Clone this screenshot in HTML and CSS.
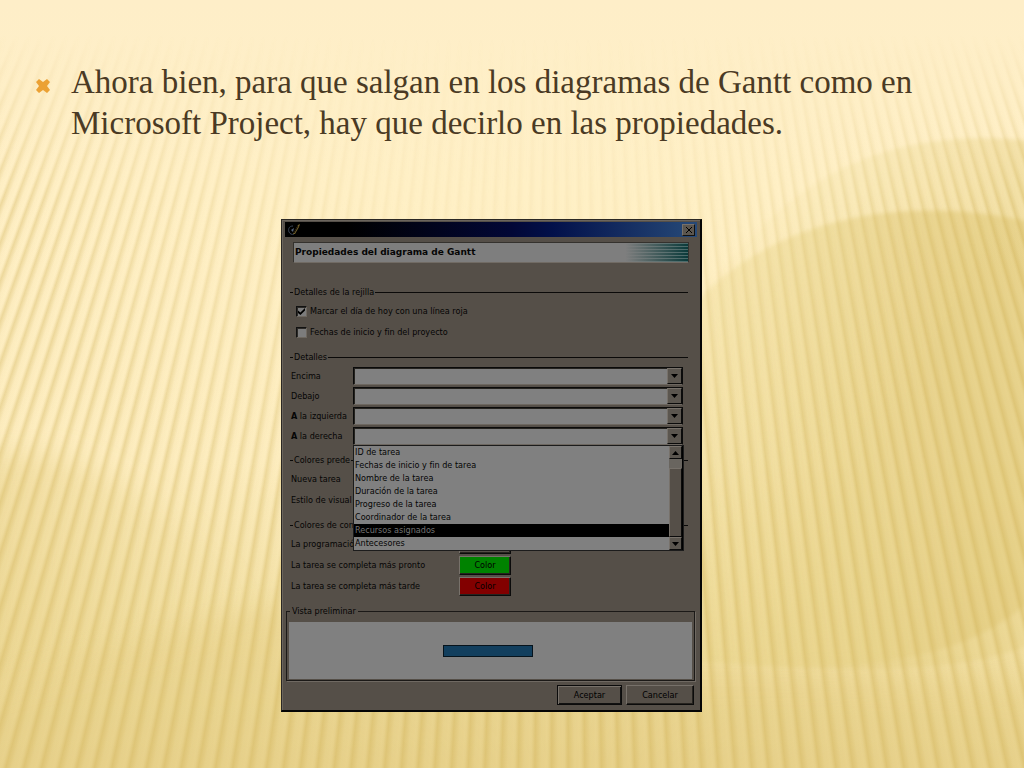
FILE: index.html
```html
<!DOCTYPE html>
<html lang="es">
<head>
  <meta charset="UTF-8" />
  <meta name="viewport" content="width=device-width, initial-scale=1.0"/>
  <title>Propiedades del diagrama de Gantt</title>
  <link rel="stylesheet" href="styles.css">
</head>
<body>
  <div class="slide">
    <!-- Fondo: ondas y rayos -->
    <svg class="ondas" viewBox="0 0 1024 768" preserveAspectRatio="none" aria-hidden="true">
      <defs>
        <linearGradient id="base" x1="0" y1="0" x2="0" y2="1">
          <stop offset="0" stop-color="#feeec8"/>
          <stop offset="0.25" stop-color="#fff0c6"/>
          <stop offset="0.6" stop-color="#fdedbf"/>
          <stop offset="0.8" stop-color="#f3e1a6"/>
          <stop offset="1" stop-color="#ead591"/>
        </linearGradient>
        <linearGradient id="onda1" x1="0.1" y1="0.1" x2="0.6" y2="0.5">
          <stop offset="0" stop-color="#ecd890" stop-opacity="0"/>
          <stop offset="1" stop-color="#e8d28a" stop-opacity="0.5"/>
        </linearGradient>
        <linearGradient id="onda2" x1="0" y1="0.4" x2="0.7" y2="0.3">
          <stop offset="0" stop-color="#ecd990" stop-opacity="0.25"/>
          <stop offset="1" stop-color="#e4cd82" stop-opacity="0.65"/>
        </linearGradient>
        <linearGradient id="lado" x1="0" y1="0" x2="1" y2="0">
          <stop offset="0" stop-color="#e8d189" stop-opacity="0.55"/>
          <stop offset="1" stop-color="#e8d189" stop-opacity="0"/>
        </linearGradient>
        <filter id="suave"><feGaussianBlur stdDeviation="14"/></filter>
        <filter id="borde"><feGaussianBlur stdDeviation="2"/></filter>
      </defs>
      <rect width="1024" height="768" fill="url(#base)"/>
      <path d="M-40 470 C40 420 150 480 250 600 C180 650 90 670 -40 690Z" fill="url(#lado)" filter="url(#suave)"/>
      <path d="M-40 700 C100 650 200 620 300 600 C450 720 700 650 1060 690 V800 H-40Z" fill="#e6cf86" opacity="0.45" filter="url(#suave)"/>
      <path d="M690 310 C770 200 860 120 1040 142 V640 C960 680 820 670 690 660Z" fill="url(#onda1)" filter="url(#borde)"/>
      <path d="M690 310 C750 235 880 185 1040 224 V590 C980 660 850 680 690 660Z" fill="url(#onda2)" filter="url(#borde)"/>
    </svg>
    <div class="rayos"></div>

    <ul class="texto">
      <li>
        <svg class="vineta" viewBox="0 0 16 16" aria-hidden="true"><path d="M1 4L4 1L8 4L12 1L15 4L12 8L15 12L12 15L8 12L4 15L1 12L4 8Z"/></svg>
        <p>Ahora bien, para que salgan en los diagramas de Gantt como en Microsoft Project, hay que decirlo en las propiedades.</p>
      </li>
    </ul>

    <form class="dialogo" onsubmit="return false">
      <div class="barra-titulo">
        <svg class="icono" viewBox="0 0 14 14" aria-hidden="true"><path d="M6 3C2 3 1 6 2 9C3 11 5 12 7 11" fill="none" stroke="#3b4656" stroke-width="1"/><path d="M4 7L7 5L6 9Z" fill="#56657b"/><path d="M6 11L11 2L13 1L12 4L8 11Z" fill="#72602a"/><path d="M7 10L11 3" stroke="#16110a"/></svg>
        <button type="button" class="cerrar" aria-label="Cerrar"><svg viewBox="0 0 8 8"><path d="M1 1L7 7M7 1L1 7"/></svg></button>
      </div>

      <div class="cabecera">
        <h1>Propiedades del diagrama de Gantt</h1>
        <div class="franjas"></div>
      </div>

      <h2 class="seccion">Detalles de la rejilla</h2>
      <label class="casilla"><input type="checkbox" checked><span>Marcar el día de hoy con una línea roja</span></label>
      <label class="casilla"><input type="checkbox"><span>Fechas de inicio y fin del proyecto</span></label>

      <h2 class="seccion seccion-media">Detalles</h2>
      <div class="campo">
        <label for="encima">Encima</label>
        <div class="combo"><select id="encima"><option></option></select><span class="flecha"><svg viewBox="0 0 7 4"><path d="M0 0H7L3.500 4Z"/></svg></span></div>
      </div>
      <div class="campo">
        <label for="debajo">Debajo</label>
        <div class="combo"><select id="debajo"><option></option></select><span class="flecha"><svg viewBox="0 0 7 4"><path d="M0 0H7L3.500 4Z"/></svg></span></div>
      </div>
      <div class="campo">
        <label for="izquierda"><b>A</b> la izquierda</label>
        <div class="combo"><select id="izquierda"><option></option></select><span class="flecha"><svg viewBox="0 0 7 4"><path d="M0 0H7L3.500 4Z"/></svg></span></div>
      </div>
      <div class="campo">
        <label for="derecha"><b>A</b> la derecha</label>
        <div class="combo">
          <select id="derecha"><option></option></select><span class="flecha"><svg viewBox="0 0 7 4"><path d="M0 0H7L3.500 4Z"/></svg></span>
          <div class="desplegable">
            <ul role="listbox" aria-label="A la derecha">
              <li role="option">ID de tarea</li>
              <li role="option">Fechas de inicio y fin de tarea</li>
              <li role="option">Nombre de la tarea</li>
              <li role="option">Duración de la tarea</li>
              <li role="option">Progreso de la tarea</li>
              <li role="option">Coordinador de la tarea</li>
              <li role="option" aria-selected="true" class="elegida">Recursos asignados</li>
              <li role="option">Antecesores</li>
            </ul>
            <div class="scroll">
              <span class="scroll-boton"><svg viewBox="0 0 7 4"><path d="M0 4H7L3.500 0Z"/></svg></span>
              <span class="scroll-pista"></span>
              <span class="scroll-pulgar"></span>
              <span class="scroll-boton"><svg viewBox="0 0 7 4"><path d="M0 0H7L3.500 4Z"/></svg></span>
            </div>
          </div>
        </div>
      </div>

      <h2 class="seccion seccion-media">Colores prede</h2>
      <div class="fila">Nueva tarea</div>
      <div class="fila">Estilo de visual</div>

      <h2 class="seccion seccion-media">Colores de con</h2>
      <div class="fila"><span>La programació</span><button type="button" class="color" aria-label="Color de la programación"></button></div>
      <div class="fila"><span>La tarea se completa más pronto</span><button type="button" class="color verde">Color</button></div>
      <div class="fila"><span>La tarea se completa más tarde</span><button type="button" class="color rojo">Color</button></div>

      <fieldset class="vista">
        <legend>Vista preliminar</legend>
        <div class="lienzo"><div class="barra-gantt"></div></div>
      </fieldset>

      <div class="botones">
        <button type="submit" class="boton aceptar">Aceptar</button>
        <button type="button" class="boton">Cancelar</button>
      </div>
    </form>
  </div>
</body>
</html>
```

FILE: styles.css
```css
* {
  box-sizing: border-box;
}

body {
  margin: 0;
  background: #feeec8;
}

.slide {
  position: relative;
  min-height: 100vh;
  display: grid;
  grid-template-columns: 281fr 421fr 322fr;
  grid-template-rows: auto auto;
  align-content: start;
  row-gap: 75px;
  padding: 62px 0 48px;
  overflow: hidden;
}

/* FONDO */
.ondas,
.rayos {
  position: absolute;
  inset: 0;
  width: 100%;
  height: 100%;
}

.rayos {
  background: repeating-conic-gradient(from 0deg at 55% -1260px,
    rgba(201, 168, 72, 0) 0deg,
    rgba(201, 168, 72, 0.04) 0.15deg,
    rgba(201, 168, 72, 0.32) 0.32deg,
    rgba(201, 168, 72, 0.04) 0.42deg,
    rgba(201, 168, 72, 0) 0.47deg);
  mask-image: linear-gradient(to bottom, transparent 35px, black 200px),
    radial-gradient(ellipse 50% 60% at 50% 15%, rgba(0, 0, 0, 0.2) 30%, black 100%);
  mask-composite: intersect;
}

/* TEXTO */
.texto {
  position: relative;
  grid-column: 1 / -1;
  list-style: none;
  margin: 0;
  padding: 0 80px 0 35px;
  font-family: "Liberation Serif", "Times New Roman", serif;
  font-size: 33px;
  line-height: 41px;
  color: #4a3a24;
}

.texto li {
  display: flex;
  align-items: flex-start;
  gap: 20px;
}

.texto p {
  margin: 0;
}

.vineta {
  flex: none;
  width: 16px;
  height: 16px;
  margin-top: 16px;
  fill: #eba134;
}

/* DIALOGO */
.dialogo {
  position: relative;
  grid-column: 2;
  display: flex;
  flex-direction: column;
  padding: 2px 3px 5px 3px;
  background: #554f48;
  border: 1px solid #2b2824;
  border-right: 2px solid #050505;
  border-bottom: 2px solid #050505;
  box-shadow: inset 1px 1px #6b655d;
  font-family: "DejaVu Sans Condensed", "DejaVu Sans", Tahoma, sans-serif;
  font-size: 9px;
  line-height: 13px;
  color: #050505;
}

.barra-titulo {
  display: flex;
  justify-content: space-between;
  align-items: center;
  height: 15px;
  padding: 0 2px;
  background: linear-gradient(to right, #000 15%, #020736 55%, #02104a 65%, #274a78);
}

.icono {
  width: 14px;
  height: 14px;
}

.cerrar {
  display: flex;
  align-items: center;
  justify-content: center;
  width: 13px;
  height: 12px;
  padding: 0;
  background: #5b564f;
  border: 1px solid;
  border-color: #77716a #111 #111 #77716a;
}

.cerrar svg {
  width: 8px;
  height: 8px;
  fill: none;
  stroke: #000;
  stroke-width: 1;
}

.cabecera {
  display: flex;
  justify-content: space-between;
  height: 21px;
  margin: 5px 8px 23px;
  background: #7e7e7e;
  border: 1px solid;
  border-color: #35322e #35322e #716b64 #35322e;
}

.cabecera h1 {
  margin: 0;
  padding-left: 1px;
  font-family: "DejaVu Sans", Verdana, sans-serif;
  font-size: 9px;
  line-height: 19px;
}

.franjas {
  width: 66px;
  background: linear-gradient(to right, #7e7e7e 5%, rgba(126, 126, 126, 0)),
    repeating-linear-gradient(to bottom, #4a6a6a 0, #4a6a6a 1px, #0a3a3a 1px, #0a3a3a 3px);
}

.seccion {
  display: flex;
  align-items: center;
  margin: 0 9px 2px 5px;
  font-size: 9px;
  font-weight: normal;
  line-height: 13px;
  white-space: nowrap;
}

.seccion::before {
  content: "";
  width: 3px;
  height: 1px;
  margin-right: 1px;
  background: #0b0a09;
}

.seccion::after {
  content: "";
  flex: 1;
  height: 1px;
  margin-left: 1px;
  background: #0b0a09;
}

.seccion-media {
  margin-top: 8px;
}

.casilla {
  display: flex;
  align-items: center;
  height: 21px;
  padding-left: 11px;
  gap: 3px;
}

.casilla input {
  appearance: none;
  width: 11px;
  height: 11px;
  margin: 0;
  background: #7c7c7c;
  border: 1px solid;
  border-color: #111 #6e6860 #6e6860 #111;
  box-shadow: inset 1px 1px #2c2a27;
}

.casilla input:checked::before {
  content: "";
  display: block;
  width: 7px;
  height: 7px;
  margin: 1px;
  background: #000;
  clip-path: polygon(0 35%, 35% 65%, 100% 0, 100% 35%, 35% 100%, 0 70%);
}

.campo {
  display: grid;
  grid-template-columns: 62px 1fr;
  align-items: center;
  height: 20px;
  padding: 0 14px 0 6px;
  white-space: nowrap;
}

.combo {
  position: relative;
  display: flex;
  height: 18px;
  background: #808080;
  border: 1px solid;
  border-color: #0b0b0b #0b0b0b #6d6760 #0b0b0b;
  box-shadow: inset 1px 1px #25231f;
}

.combo select {
  appearance: none;
  flex: 1;
  min-width: 0;
  padding: 0;
  background: none;
  border: none;
  font: inherit;
}

.flecha,
.scroll-boton {
  display: flex;
  align-items: center;
  justify-content: center;
  width: 15px;
  background: #5b564f;
  border: 1px solid;
  border-color: #77716a #0b0b0b #0b0b0b #77716a;
}

.flecha {
  pointer-events: none;
}

.flecha svg,
.scroll-boton svg {
  width: 7px;
  height: 4px;
}

.desplegable {
  position: absolute;
  z-index: 1;
  top: 17px;
  left: -1px;
  right: -2px;
  display: flex;
  background: #808080;
  border: 1px solid #1c1c1c;
}

.desplegable ul {
  flex: 1;
  list-style: none;
  margin: 0;
  padding: 0;
}

.desplegable li {
  height: 13px;
  padding-left: 1px;
}

.desplegable .elegida {
  background: #000;
  color: #737373;
}

.scroll {
  display: flex;
  flex-direction: column;
  width: 14px;
  background: #69655f;
  border-right: 1px solid #000;
}

.scroll-boton {
  width: auto;
  height: 13px;
}

.scroll-pista {
  height: 9px;
}

.scroll-pulgar {
  flex: 1;
  background: #554f48;
  border: 1px solid;
  border-color: #77716a #0b0b0b #0b0b0b #77716a;
}

.fila {
  display: grid;
  grid-template-columns: 168px 52px;
  align-items: center;
  height: 21px;
  padding-left: 6px;
}

.color {
  height: 19px;
  padding: 0;
  background: #554f48;
  border: 1px solid;
  border-color: #77716a #0b0b0b #0b0b0b #77716a;
  box-shadow: inset -1px -1px #26231f;
  font: inherit;
  color: #000;
}

.verde {
  background: #008200;
}

.rojo {
  background: #820000;
}

.vista {
  min-width: 0;
  margin: 8px 2px 4px 1px;
  padding: 4px 2px 1px;
  border: 1px solid #1b1917;
  box-shadow: 1px 1px #6f6962;
}

.vista legend {
  margin-left: 1px;
  padding: 0 2px;
}

.lienzo {
  display: flex;
  align-items: center;
  justify-content: center;
  height: 57px;
  padding-right: 6px;
  background: #808080;
}

.barra-gantt {
  width: 90px;
  height: 12px;
  background: #123f5e;
  border: 1px solid #06131c;
}

.botones {
  display: flex;
  justify-content: flex-end;
  gap: 4px;
  padding-right: 3px;
}

.boton {
  width: 68px;
  height: 20px;
  padding: 0;
  background: #554f48;
  border: 1px solid;
  border-color: #77716a #0b0b0b #0b0b0b #77716a;
  box-shadow: inset -1px -1px #26231f;
  font: inherit;
  color: #000;
}

.aceptar {
  width: 65px;
  border-color: #0b0b0b;
  box-shadow: inset 1px 1px #77716a, inset -1px -1px #111;
}
```
